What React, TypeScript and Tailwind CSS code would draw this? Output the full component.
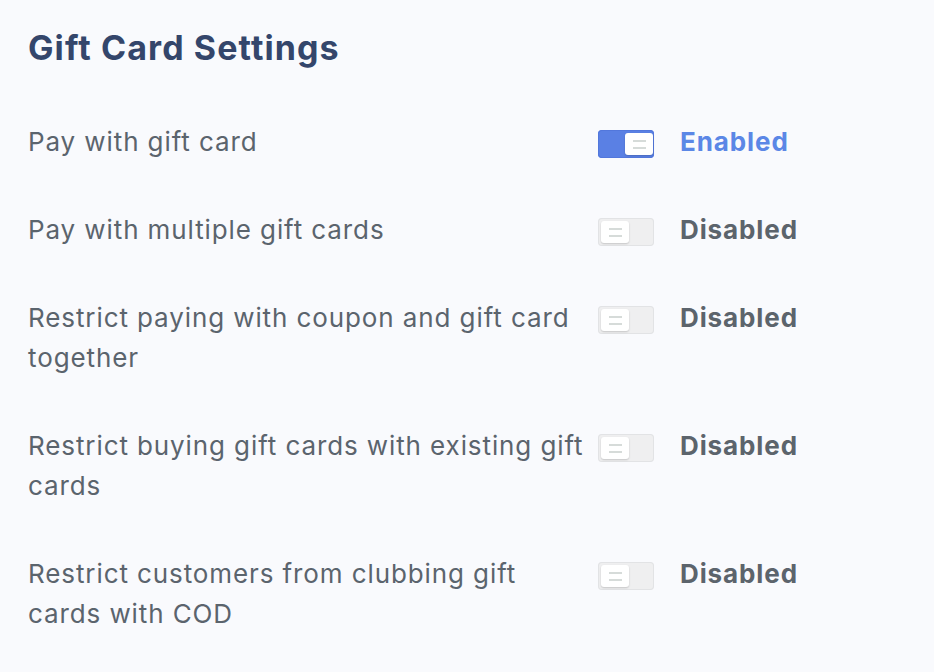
const settings = [
  { label: "Pay with gift card", enabled: true },
  { label: "Pay with multiple gift cards", enabled: false },
  { label: "Restrict paying with coupon and gift card together", enabled: false },
  { label: "Restrict buying gift cards with existing gift cards", enabled: false },
  { label: "Restrict customers from clubbing gift cards with COD", enabled: false },
];

function Toggle({ on }: { on: boolean }) {
  return (
    <div
      className={`mt-2 ml-[8px] flex h-[28px] w-[56px] shrink-0 items-center rounded-[4px] ${
        on
          ? "justify-end bg-[#5a80e4] pr-[1px] shadow-[inset_0_0_0_1px_#5277dc]"
          : "justify-start bg-[#efeff0] pl-[3px] shadow-[inset_0_0_0_1px_#e2e3e5]"
      }`}
    >
      <div className="flex h-[22px] w-[28px] flex-col items-center justify-center gap-[5px] rounded-[3px] bg-white shadow-[0_1px_2px_rgba(0,0,0,0.18)]">
        <span className="h-[2px] w-[13px] bg-[#d6dbd9]" />
        <span className="h-[2px] w-[13px] bg-[#d6dbd9]" />
      </div>
    </div>
  );
}

export default function App() {
  return (
    <div
      className="min-h-screen bg-[#f9fafd] px-[28px] pt-[25px]"
      style={{ fontFamily: "Inter, 'Noto Sans', sans-serif" }}
    >
      <h1 className="text-[34px] font-bold leading-[46px] tracking-[1.1px] text-[#34466b]">
        Gift Card Settings
      </h1>

      <div className="mt-[51px] flex flex-col gap-[48px]">
        {settings.map((s) => (
          <div key={s.label} className="flex items-start">
            <p className="w-[562px] text-[26px] leading-[40px] tracking-[0.9px] text-[#5b646d]">
              {s.label}
            </p>
            <Toggle on={s.enabled} />
            <span
              className={`ml-[26px] text-[26px] font-bold leading-[40px] tracking-[0.9px] ${
                s.enabled ? "text-[#5b87e6]" : "text-[#5c646c]"
              }`}
            >
              {s.enabled ? "Enabled" : "Disabled"}
            </span>
          </div>
        ))}
      </div>
    </div>
  );
}
